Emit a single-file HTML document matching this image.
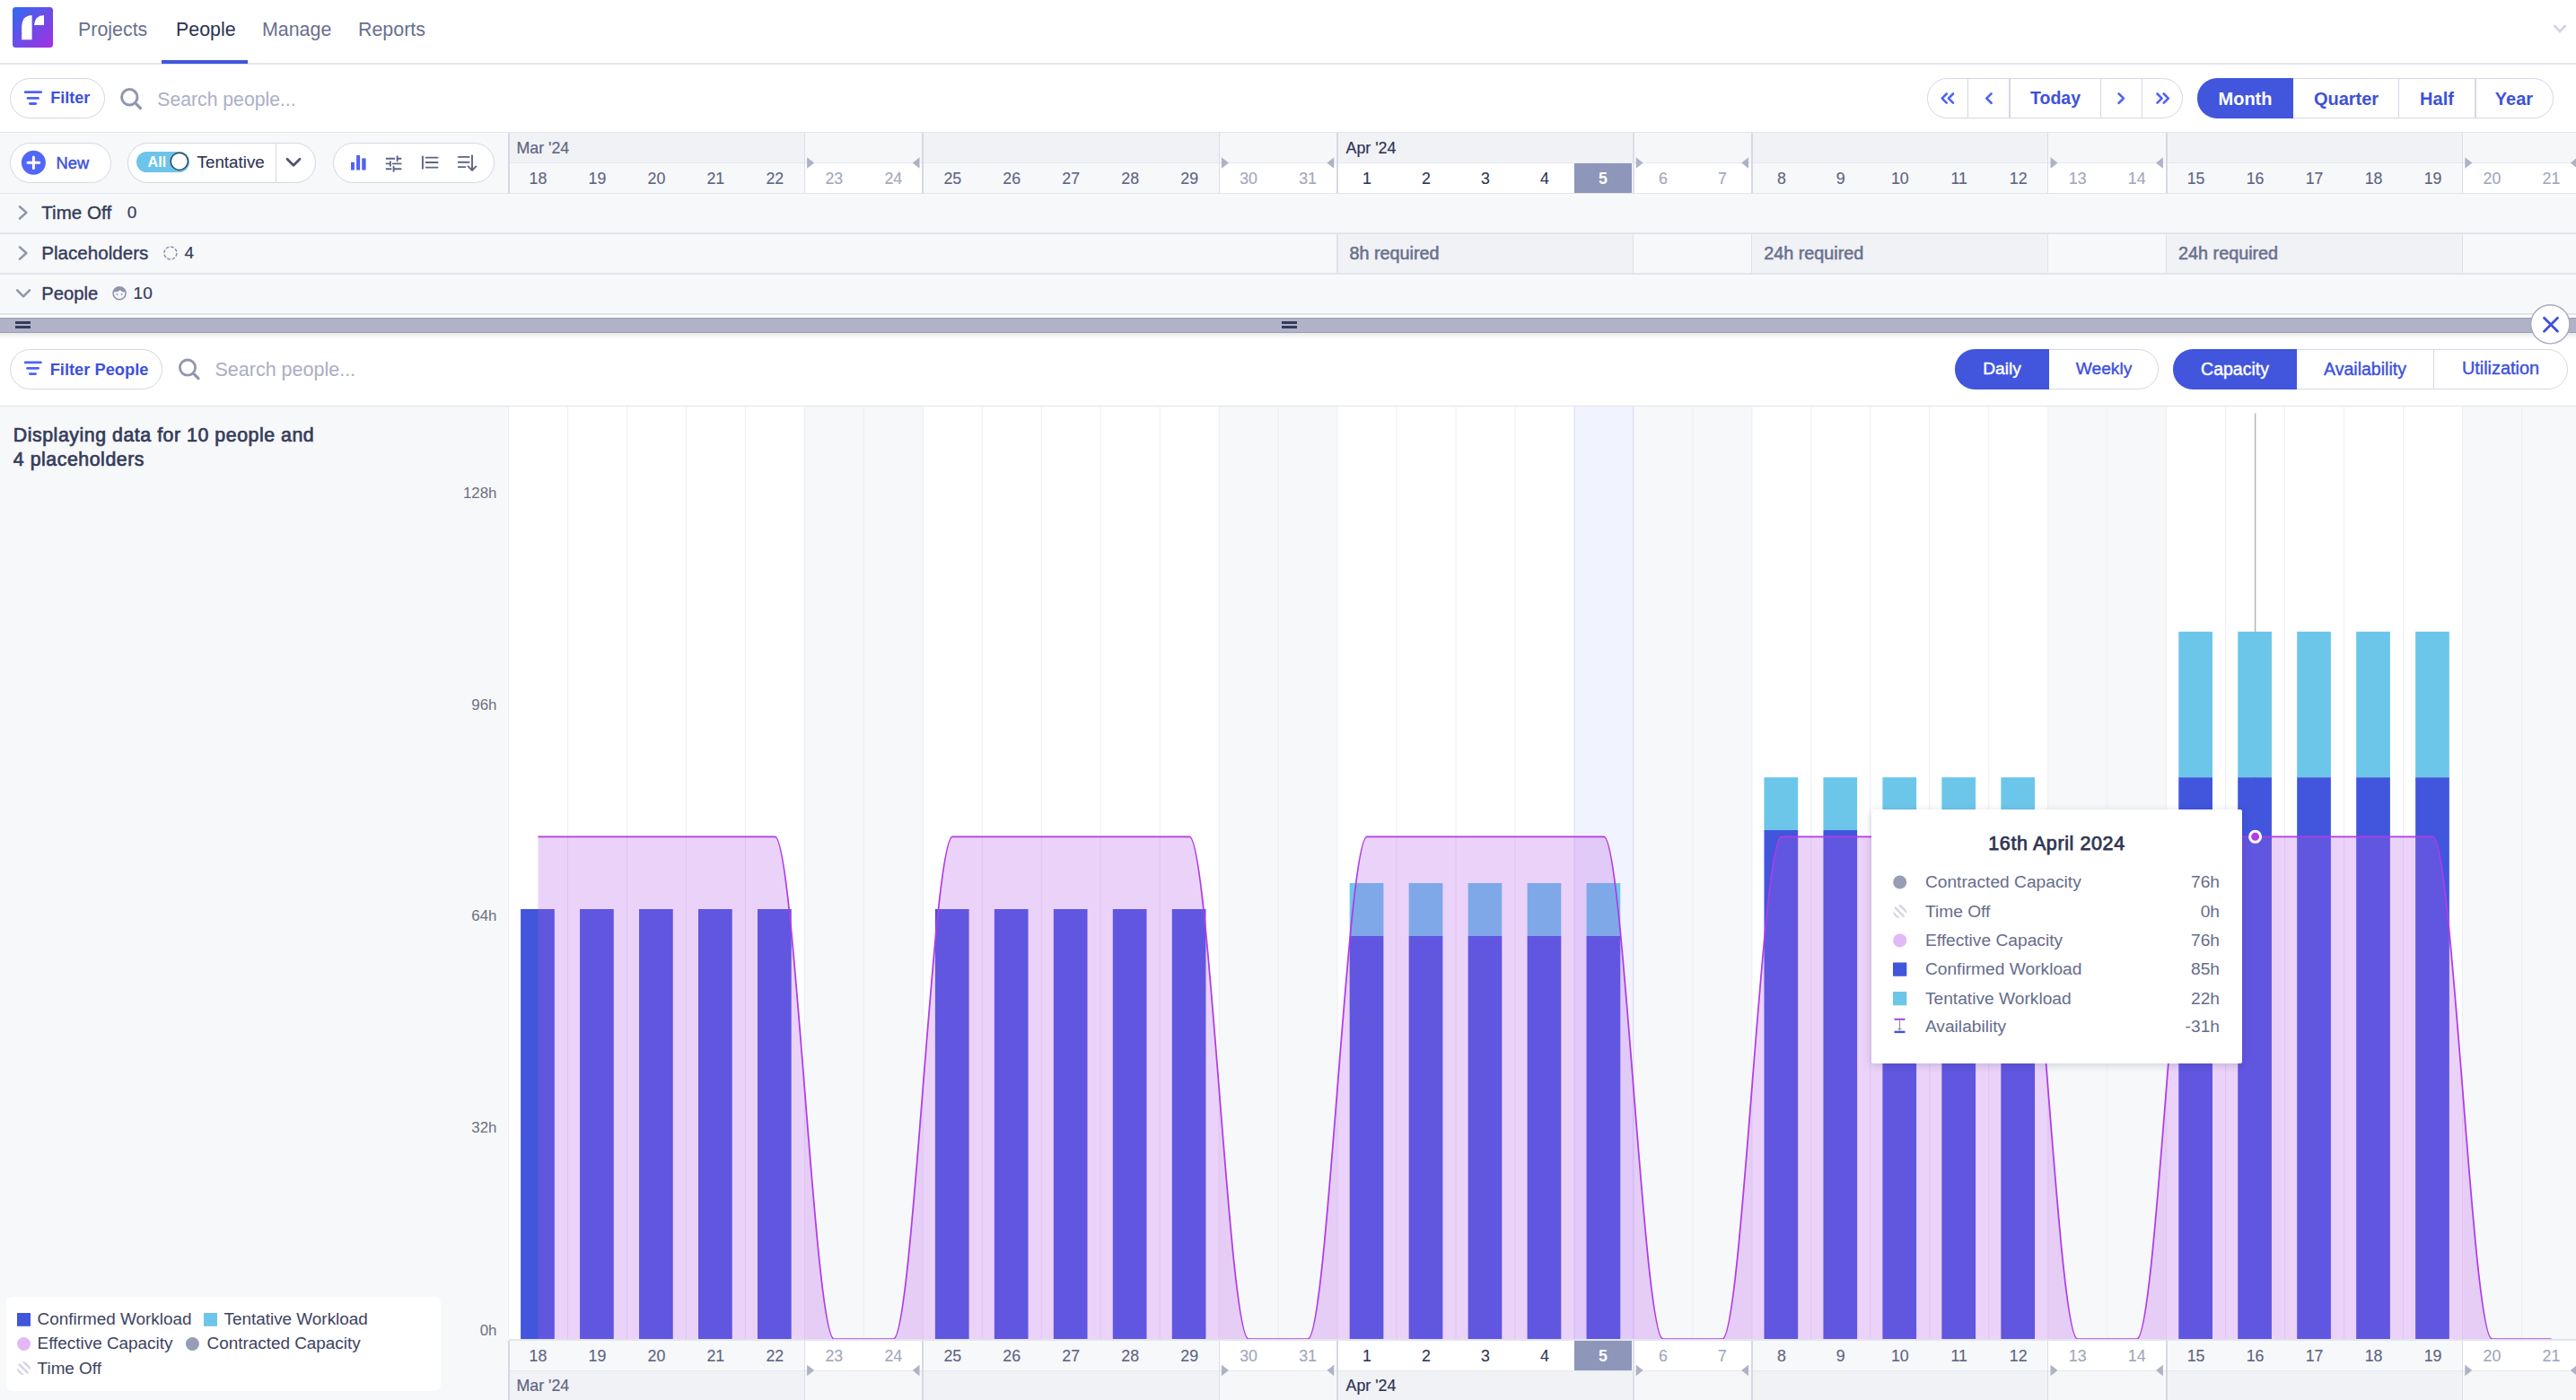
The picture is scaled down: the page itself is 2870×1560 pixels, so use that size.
<!DOCTYPE html>
<html><head><meta charset="utf-8"><title>People - Capacity</title>
<style>
html,body{margin:0;padding:0;}
body{width:2870px;height:1560px;overflow:hidden;position:relative;background:#fff;font-family:"Liberation Sans", sans-serif;}
.t{position:absolute;white-space:nowrap;}
.b{position:absolute;}
svg{overflow:visible}
</style></head><body>
<div class="b" style="left:0.00px;top:0.00px;width:2870.00px;height:71.00px;background:#fff;"></div>
<div class="b" style="left:0.00px;top:70.00px;width:2870.00px;height:1.50px;background:#e3e5ec;"></div>
<div class="b" style="left:0.00px;top:71.50px;width:2870.00px;height:75.50px;background:#fff;"></div>
<div class="b" style="left:0.00px;top:146.50px;width:2870.00px;height:1.50px;background:#e3e5ec;"></div>
<div class="b" style="left:0.00px;top:148.00px;width:2870.00px;height:202.00px;background:#f7f8fa;"></div>
<svg class="b" style="left:14px;top:8px" width="45" height="45" viewBox="0 0 45 45">
<defs><linearGradient id="lg" x1="0" y1="0" x2="1" y2="1"><stop offset="0" stop-color="#2f6cf0"/><stop offset="1" stop-color="#a52fe0"/></linearGradient></defs>
<rect width="45" height="45" rx="3.4" fill="url(#lg)"/>
<path d="M10.2 36.2 L10.2 22 Q10.4 9.2 21.6 9 L21.6 36.2 Z" fill="#fff"/>
<path d="M24 20 Q24.6 9.4 35 9 L35 20 Z" fill="#fff"/>
</svg>
<div class="t" style="left:87.00px;top:15.68px;font-size:21.4px;line-height:34.24px;color:#687090;font-weight:400;">Projects</div>
<div class="t" style="left:196.00px;top:15.68px;font-size:21.4px;line-height:34.24px;color:#2b3250;font-weight:400;">People</div>
<div class="t" style="left:292.00px;top:15.68px;font-size:21.4px;line-height:34.24px;color:#687090;font-weight:400;">Manage</div>
<div class="t" style="left:399.00px;top:15.68px;font-size:21.4px;line-height:34.24px;color:#687090;font-weight:400;">Reports</div>
<div class="b" style="left:180.00px;top:67.00px;width:96.00px;height:4.00px;background:#4156dd;"></div>
<svg class="b" style="left:2842px;top:25px" width="20" height="14" viewBox="0 0 20 14"><path d="M3.6 3.2 L10 9.9 L16.6 3.2" fill="none" stroke="#d3d5e2" stroke-width="2.8" stroke-linejoin="miter"/></svg>
<div class="b" style="left:11.00px;top:87.00px;width:105.60px;height:44.70px;border:1.5px solid #d5d7e3;border-radius:23px;background:#fff;box-sizing:border-box;"></div>
<svg class="b" style="left:20px;top:95px" width="34" height="28" viewBox="0 0 34 28"><g stroke="#4f63f5" stroke-width="2.8" stroke-linecap="round"><path d="M8.2 7.7 H25.6"/><path d="M11 14.4 H22.5"/><path d="M13.4 20.5 H19.7"/></g></svg>
<div class="t" style="left:56.30px;top:95.20px;font-size:18px;line-height:28.80px;color:#3d51dc;font-weight:700;">Filter</div>
<svg class="b" style="left:130px;top:94px" width="32" height="32" viewBox="0 0 32 32"><circle cx="14.3" cy="14.3" r="8.7" fill="none" stroke="#9196b0" stroke-width="3"/><path d="M21.5 21.6 L26.4 26.5" stroke="#9196b0" stroke-width="3.2" stroke-linecap="round"/></svg>
<div class="t" style="left:175.30px;top:93.94px;font-size:21.2px;line-height:33.92px;color:#abb0c6;font-weight:400;">Search people...</div>
<div class="b" style="left:2147.20px;top:87.20px;width:285.30px;height:44.80px;border:1.5px solid #d5d8e6;border-radius:22.40px;box-sizing:border-box;background:#fff"></div>
<div class="b" style="left:2191.65px;top:87.20px;width:1.50px;height:44.80px;background:#d5d8e6;"></div>
<div class="b" style="left:2238.05px;top:87.20px;width:1.50px;height:44.80px;background:#d5d8e6;"></div>
<div class="b" style="left:2339.65px;top:87.20px;width:1.50px;height:44.80px;background:#d5d8e6;"></div>
<div class="b" style="left:2385.85px;top:87.20px;width:1.50px;height:44.80px;background:#d5d8e6;"></div>
<svg class="b" style="left:2155px;top:95px" width="30" height="30" viewBox="0 0 30 30"><g fill="none" stroke="#4f63f5" stroke-width="2.6" stroke-linecap="round" stroke-linejoin="round"><path d="M13.8 9.5 L8.7 14.6 L13.8 19.7"/><path d="M21 9.5 L15.9 14.6 L21 19.7"/></g></svg>
<svg class="b" style="left:2201px;top:95px" width="30" height="30" viewBox="0 0 30 30"><g fill="none" stroke="#4f63f5" stroke-width="2.6" stroke-linecap="round" stroke-linejoin="round"><path d="M17.6 9.4 L12.3 14.6 L17.6 19.8"/></g></svg>
<div class="t" style="left:1990.00px;width:600px;text-align:center;top:94.00px;font-size:19.5px;line-height:31.20px;color:#3d51dc;font-weight:700;">Today</div>
<svg class="b" style="left:2348px;top:95px" width="30" height="30" viewBox="0 0 30 30"><g fill="none" stroke="#4f63f5" stroke-width="2.6" stroke-linecap="round" stroke-linejoin="round"><path d="M12.6 9.4 L17.9 14.6 L12.6 19.8"/></g></svg>
<svg class="b" style="left:2395px;top:95px" width="30" height="30" viewBox="0 0 30 30"><g fill="none" stroke="#4f63f5" stroke-width="2.6" stroke-linecap="round" stroke-linejoin="round"><path d="M8.5 9.5 L13.6 14.6 L8.5 19.7"/><path d="M15.7 9.5 L20.8 14.6 L15.7 19.7"/></g></svg>
<div class="b" style="left:2448.00px;top:87.20px;width:397.00px;height:44.80px;border:1.5px solid #d5d8e6;border-radius:22.40px;box-sizing:border-box;background:#fff"></div>
<div class="b" style="left:2448.00px;top:87.20px;width:107.00px;height:44.80px;border-radius:22.40px 0 0 22.40px;background:#4156dd"></div>
<div class="b" style="left:2671.75px;top:87.20px;width:1.50px;height:44.80px;background:#d5d8e6;"></div>
<div class="b" style="left:2757.25px;top:87.20px;width:1.50px;height:44.80px;background:#d5d8e6;"></div>
<div class="t" style="left:2201.50px;width:600px;text-align:center;top:93.60px;font-size:20px;line-height:32.00px;color:#fff;font-weight:700;">Month</div>
<div class="t" style="left:2314.00px;width:600px;text-align:center;top:93.60px;font-size:20px;line-height:32.00px;color:#3d51dc;font-weight:700;">Quarter</div>
<div class="t" style="left:2415.00px;width:600px;text-align:center;top:93.60px;font-size:20px;line-height:32.00px;color:#3d51dc;font-weight:700;">Half</div>
<div class="t" style="left:2501.00px;width:600px;text-align:center;top:93.60px;font-size:20px;line-height:32.00px;color:#3d51dc;font-weight:700;">Year</div>
<div class="b" style="left:11.30px;top:159.10px;width:113.00px;height:45.00px;border:1.5px solid #d5d7e3;border-radius:23px;background:#fff;box-sizing:border-box;"></div>
<svg class="b" style="left:23px;top:167px" width="29" height="29" viewBox="0 0 29 29"><circle cx="14.4" cy="14.3" r="13.5" fill="#5267f8"/><path d="M14.4 8 V20.6 M8.1 14.3 H20.7" stroke="#fff" stroke-width="3" stroke-linecap="round"/></svg>
<div class="t" style="left:62.60px;top:166.96px;font-size:18.3px;line-height:29.28px;color:#3d51dc;font-weight:400;-webkit-text-stroke:0.45px #3d51dc;">New</div>
<div class="b" style="left:142.40px;top:159.10px;width:209.80px;height:45.00px;border:1.5px solid #d5d7e3;border-radius:23px;background:#fff;box-sizing:border-box;"></div>
<div class="b" style="left:306.90px;top:159.10px;width:1.50px;height:44.40px;background:#d5d7e3;"></div>
<div class="b" style="left:152.20px;top:168.90px;width:58.70px;height:22.80px;background:#6cc4ea;border-radius:12px;"></div>
<div class="t" style="left:164.60px;top:167.64px;font-size:16.2px;line-height:25.92px;color:#fff;font-weight:700;">All</div>
<svg class="b" style="left:187px;top:167px" width="26" height="26" viewBox="0 0 26 26"><circle cx="12.8" cy="12.8" r="10.9" fill="#6cc4ea"/><circle cx="12.8" cy="12.8" r="9.6" fill="#fff" stroke="#2f4a5e" stroke-width="1.5"/></svg>
<div class="t" style="left:219.60px;top:165.86px;font-size:18.8px;line-height:30.08px;color:#2e3553;font-weight:400;-webkit-text-stroke:0.1px #2e3553;">Tentative</div>
<svg class="b" style="left:316px;top:172px" width="22" height="18" viewBox="0 0 22 18"><path d="M4 5.3 L11 12.3 L18 5.3" fill="none" stroke="#4e5571" stroke-width="2.8" stroke-linecap="round" stroke-linejoin="round"/></svg>
<div class="b" style="left:371.10px;top:159.20px;width:179.60px;height:45.00px;border:1.5px solid #d5d7e3;border-radius:23px;background:#fff;box-sizing:border-box;"></div>
<svg class="b" style="left:380px;top:165px" width="165" height="32" viewBox="380 165 165 32">
<g fill="#4f63f5"><rect x="391" y="180.7" width="3.9" height="8.8"/><rect x="397.1" y="173" width="4" height="16.5"/><rect x="403.2" y="176.4" width="4.4" height="13.1"/></g>
<g stroke="#5d6485" stroke-width="1.9" stroke-linecap="round" fill="none">
<path d="M430.6 176.7 H439.3 M442.6 176.7 H446.6 M442.6 174.2 V179.2"/>
<path d="M430.6 182.4 H434.9 M437.8 182.4 H446.6 M434.9 180.1 V184.8"/>
<path d="M430.6 188.3 H435.6 M438.6 188.3 H446.6 M438.6 185.8 V190.8"/>
<path d="M470.9 174.4 V187.8"/>
<path d="M474.6 175.6 H487.6 M474.6 181 H487.6 M474.6 186.6 H487.6"/>
<path d="M510.8 174.9 H522.6 M510.8 180.7 H522.6 M510.8 186.1 H518.4"/>
<path d="M526 173.2 V189.5 M521.6 185.4 L526 189.7 L530.4 185.4" stroke-linejoin="round"/>
</g></svg>
<div class="b" style="left:566.50px;top:147.50px;width:329.85px;height:34.00px;background:#f1f2f5;"></div>
<div class="b" style="left:896.35px;top:147.50px;width:131.94px;height:34.00px;background:#f6f7f9;"></div>
<div class="b" style="left:1028.29px;top:147.50px;width:329.85px;height:34.00px;background:#f1f2f5;"></div>
<div class="b" style="left:1358.14px;top:147.50px;width:131.94px;height:34.00px;background:#f6f7f9;"></div>
<div class="b" style="left:1490.08px;top:147.50px;width:329.85px;height:34.00px;background:#f1f2f5;"></div>
<div class="b" style="left:1819.93px;top:147.50px;width:131.94px;height:34.00px;background:#f6f7f9;"></div>
<div class="b" style="left:1951.87px;top:147.50px;width:329.85px;height:34.00px;background:#f1f2f5;"></div>
<div class="b" style="left:2281.72px;top:147.50px;width:131.94px;height:34.00px;background:#f6f7f9;"></div>
<div class="b" style="left:2413.66px;top:147.50px;width:329.85px;height:34.00px;background:#f1f2f5;"></div>
<div class="b" style="left:2743.51px;top:147.50px;width:131.94px;height:34.00px;background:#f6f7f9;"></div>
<div class="b" style="left:566.50px;top:181.50px;width:65.97px;height:33.50px;background:#f7f8fa;"></div>
<div class="b" style="left:632.47px;top:181.50px;width:65.97px;height:33.50px;background:#f7f8fa;"></div>
<div class="b" style="left:698.44px;top:181.50px;width:65.97px;height:33.50px;background:#f7f8fa;"></div>
<div class="b" style="left:764.41px;top:181.50px;width:65.97px;height:33.50px;background:#f7f8fa;"></div>
<div class="b" style="left:830.38px;top:181.50px;width:65.97px;height:33.50px;background:#f7f8fa;"></div>
<div class="b" style="left:896.35px;top:181.50px;width:65.97px;height:33.50px;background:#ffffff;"></div>
<div class="b" style="left:962.32px;top:181.50px;width:65.97px;height:33.50px;background:#ffffff;"></div>
<div class="b" style="left:1028.29px;top:181.50px;width:65.97px;height:33.50px;background:#f7f8fa;"></div>
<div class="b" style="left:1094.26px;top:181.50px;width:65.97px;height:33.50px;background:#f7f8fa;"></div>
<div class="b" style="left:1160.23px;top:181.50px;width:65.97px;height:33.50px;background:#f7f8fa;"></div>
<div class="b" style="left:1226.20px;top:181.50px;width:65.97px;height:33.50px;background:#f7f8fa;"></div>
<div class="b" style="left:1292.17px;top:181.50px;width:65.97px;height:33.50px;background:#f7f8fa;"></div>
<div class="b" style="left:1358.14px;top:181.50px;width:65.97px;height:33.50px;background:#ffffff;"></div>
<div class="b" style="left:1424.11px;top:181.50px;width:65.97px;height:33.50px;background:#ffffff;"></div>
<div class="b" style="left:1490.08px;top:181.50px;width:65.97px;height:33.50px;background:#ffffff;"></div>
<div class="b" style="left:1556.05px;top:181.50px;width:65.97px;height:33.50px;background:#ffffff;"></div>
<div class="b" style="left:1622.02px;top:181.50px;width:65.97px;height:33.50px;background:#ffffff;"></div>
<div class="b" style="left:1687.99px;top:181.50px;width:65.97px;height:33.50px;background:#ffffff;"></div>
<div class="b" style="left:1753.96px;top:181.50px;width:65.97px;height:33.50px;background:#f7f8fa;"></div>
<div class="b" style="left:1819.93px;top:181.50px;width:65.97px;height:33.50px;background:#ffffff;"></div>
<div class="b" style="left:1885.90px;top:181.50px;width:65.97px;height:33.50px;background:#ffffff;"></div>
<div class="b" style="left:1951.87px;top:181.50px;width:65.97px;height:33.50px;background:#f7f8fa;"></div>
<div class="b" style="left:2017.84px;top:181.50px;width:65.97px;height:33.50px;background:#f7f8fa;"></div>
<div class="b" style="left:2083.81px;top:181.50px;width:65.97px;height:33.50px;background:#f7f8fa;"></div>
<div class="b" style="left:2149.78px;top:181.50px;width:65.97px;height:33.50px;background:#f7f8fa;"></div>
<div class="b" style="left:2215.75px;top:181.50px;width:65.97px;height:33.50px;background:#f7f8fa;"></div>
<div class="b" style="left:2281.72px;top:181.50px;width:65.97px;height:33.50px;background:#ffffff;"></div>
<div class="b" style="left:2347.69px;top:181.50px;width:65.97px;height:33.50px;background:#ffffff;"></div>
<div class="b" style="left:2413.66px;top:181.50px;width:65.97px;height:33.50px;background:#f7f8fa;"></div>
<div class="b" style="left:2479.63px;top:181.50px;width:65.97px;height:33.50px;background:#f7f8fa;"></div>
<div class="b" style="left:2545.60px;top:181.50px;width:65.97px;height:33.50px;background:#f7f8fa;"></div>
<div class="b" style="left:2611.57px;top:181.50px;width:65.97px;height:33.50px;background:#f7f8fa;"></div>
<div class="b" style="left:2677.54px;top:181.50px;width:65.97px;height:33.50px;background:#f7f8fa;"></div>
<div class="b" style="left:2743.51px;top:181.50px;width:65.97px;height:33.50px;background:#ffffff;"></div>
<div class="b" style="left:2809.48px;top:181.50px;width:65.97px;height:33.50px;background:#ffffff;"></div>
<div class="b" style="left:1753.96px;top:181.50px;width:63.97px;height:33.50px;background:#8e96ba;"></div>
<div class="b" style="left:566.50px;top:181.00px;width:2303.50px;height:1.00px;background:#e6e8ee;"></div>
<div class="b" style="left:565.50px;top:147.50px;width:2.00px;height:67.50px;background:#d6d8e3;"></div>
<div class="b" style="left:895.85px;top:147.50px;width:1.20px;height:67.50px;background:#dcdee6;"></div>
<div class="b" style="left:1027.29px;top:147.50px;width:2.00px;height:67.50px;background:#d6d8e3;"></div>
<div class="b" style="left:1357.64px;top:147.50px;width:1.20px;height:67.50px;background:#dcdee6;"></div>
<div class="b" style="left:1489.08px;top:147.50px;width:2.00px;height:67.50px;background:#d6d8e3;"></div>
<div class="b" style="left:1819.43px;top:147.50px;width:1.20px;height:67.50px;background:#dcdee6;"></div>
<div class="b" style="left:1950.87px;top:147.50px;width:2.00px;height:67.50px;background:#d6d8e3;"></div>
<div class="b" style="left:2281.22px;top:147.50px;width:1.20px;height:67.50px;background:#dcdee6;"></div>
<div class="b" style="left:2412.66px;top:147.50px;width:2.00px;height:67.50px;background:#d6d8e3;"></div>
<div class="b" style="left:2743.01px;top:147.50px;width:1.20px;height:67.50px;background:#dcdee6;"></div>
<div class="b" style="left:2874.45px;top:147.50px;width:2.00px;height:67.50px;background:#d6d8e3;"></div>
<svg class="b" style="left:0;top:0" width="2870" height="1560"><g fill="#aeb2c7"><path d="M899.15 175.20 L907.15 181.50 L899.15 187.80 Z"/><path d="M1024.49 175.20 L1016.69 181.50 L1024.49 187.80 Z"/><path d="M1360.94 175.20 L1368.94 181.50 L1360.94 187.80 Z"/><path d="M1486.28 175.20 L1478.48 181.50 L1486.28 187.80 Z"/><path d="M1822.73 175.20 L1830.73 181.50 L1822.73 187.80 Z"/><path d="M1948.07 175.20 L1940.27 181.50 L1948.07 187.80 Z"/><path d="M2284.52 175.20 L2292.52 181.50 L2284.52 187.80 Z"/><path d="M2409.86 175.20 L2402.06 181.50 L2409.86 187.80 Z"/><path d="M2746.31 175.20 L2754.31 181.50 L2746.31 187.80 Z"/><path d="M2871.65 175.20 L2863.85 181.50 L2871.65 187.80 Z"/></g></svg>
<div class="t" style="left:575.50px;top:151.36px;font-size:17.8px;line-height:28.48px;color:#5f6683;font-weight:400;-webkit-text-stroke:0.2px #5f6683;">Mar '24</div>
<div class="t" style="left:1499.58px;top:151.36px;font-size:17.8px;line-height:28.48px;color:#2e3553;font-weight:400;-webkit-text-stroke:0.2px #2e3553;">Apr '24</div>
<div class="t" style="left:299.49px;width:600px;text-align:center;top:185.16px;font-size:17.8px;line-height:28.48px;color:#5d6482;font-weight:400;-webkit-text-stroke:0.12px #5d6482;">18</div>
<div class="t" style="left:365.46px;width:600px;text-align:center;top:185.16px;font-size:17.8px;line-height:28.48px;color:#5d6482;font-weight:400;-webkit-text-stroke:0.12px #5d6482;">19</div>
<div class="t" style="left:431.42px;width:600px;text-align:center;top:185.16px;font-size:17.8px;line-height:28.48px;color:#5d6482;font-weight:400;-webkit-text-stroke:0.12px #5d6482;">20</div>
<div class="t" style="left:497.39px;width:600px;text-align:center;top:185.16px;font-size:17.8px;line-height:28.48px;color:#5d6482;font-weight:400;-webkit-text-stroke:0.12px #5d6482;">21</div>
<div class="t" style="left:563.37px;width:600px;text-align:center;top:185.16px;font-size:17.8px;line-height:28.48px;color:#5d6482;font-weight:400;-webkit-text-stroke:0.12px #5d6482;">22</div>
<div class="t" style="left:629.34px;width:600px;text-align:center;top:185.16px;font-size:17.8px;line-height:28.48px;color:#a2a7bc;font-weight:400;-webkit-text-stroke:0.12px #a2a7bc;">23</div>
<div class="t" style="left:695.31px;width:600px;text-align:center;top:185.16px;font-size:17.8px;line-height:28.48px;color:#a2a7bc;font-weight:400;-webkit-text-stroke:0.12px #a2a7bc;">24</div>
<div class="t" style="left:761.28px;width:600px;text-align:center;top:185.16px;font-size:17.8px;line-height:28.48px;color:#5d6482;font-weight:400;-webkit-text-stroke:0.12px #5d6482;">25</div>
<div class="t" style="left:827.24px;width:600px;text-align:center;top:185.16px;font-size:17.8px;line-height:28.48px;color:#5d6482;font-weight:400;-webkit-text-stroke:0.12px #5d6482;">26</div>
<div class="t" style="left:893.22px;width:600px;text-align:center;top:185.16px;font-size:17.8px;line-height:28.48px;color:#5d6482;font-weight:400;-webkit-text-stroke:0.12px #5d6482;">27</div>
<div class="t" style="left:959.18px;width:600px;text-align:center;top:185.16px;font-size:17.8px;line-height:28.48px;color:#5d6482;font-weight:400;-webkit-text-stroke:0.12px #5d6482;">28</div>
<div class="t" style="left:1025.15px;width:600px;text-align:center;top:185.16px;font-size:17.8px;line-height:28.48px;color:#5d6482;font-weight:400;-webkit-text-stroke:0.12px #5d6482;">29</div>
<div class="t" style="left:1091.12px;width:600px;text-align:center;top:185.16px;font-size:17.8px;line-height:28.48px;color:#a2a7bc;font-weight:400;-webkit-text-stroke:0.12px #a2a7bc;">30</div>
<div class="t" style="left:1157.10px;width:600px;text-align:center;top:185.16px;font-size:17.8px;line-height:28.48px;color:#a2a7bc;font-weight:400;-webkit-text-stroke:0.12px #a2a7bc;">31</div>
<div class="t" style="left:1223.07px;width:600px;text-align:center;top:185.16px;font-size:17.8px;line-height:28.48px;color:#2e3553;font-weight:400;-webkit-text-stroke:0.12px #2e3553;">1</div>
<div class="t" style="left:1289.03px;width:600px;text-align:center;top:185.16px;font-size:17.8px;line-height:28.48px;color:#2e3553;font-weight:400;-webkit-text-stroke:0.12px #2e3553;">2</div>
<div class="t" style="left:1355.00px;width:600px;text-align:center;top:185.16px;font-size:17.8px;line-height:28.48px;color:#2e3553;font-weight:400;-webkit-text-stroke:0.12px #2e3553;">3</div>
<div class="t" style="left:1420.97px;width:600px;text-align:center;top:185.16px;font-size:17.8px;line-height:28.48px;color:#2e3553;font-weight:400;-webkit-text-stroke:0.12px #2e3553;">4</div>
<div class="t" style="left:1485.94px;width:600px;text-align:center;top:185.16px;font-size:17.8px;line-height:28.48px;color:#ffffff;font-weight:700;">5</div>
<div class="t" style="left:1552.91px;width:600px;text-align:center;top:185.16px;font-size:17.8px;line-height:28.48px;color:#a2a7bc;font-weight:400;-webkit-text-stroke:0.12px #a2a7bc;">6</div>
<div class="t" style="left:1618.88px;width:600px;text-align:center;top:185.16px;font-size:17.8px;line-height:28.48px;color:#a2a7bc;font-weight:400;-webkit-text-stroke:0.12px #a2a7bc;">7</div>
<div class="t" style="left:1684.86px;width:600px;text-align:center;top:185.16px;font-size:17.8px;line-height:28.48px;color:#5d6482;font-weight:400;-webkit-text-stroke:0.12px #5d6482;">8</div>
<div class="t" style="left:1750.82px;width:600px;text-align:center;top:185.16px;font-size:17.8px;line-height:28.48px;color:#5d6482;font-weight:400;-webkit-text-stroke:0.12px #5d6482;">9</div>
<div class="t" style="left:1816.80px;width:600px;text-align:center;top:185.16px;font-size:17.8px;line-height:28.48px;color:#5d6482;font-weight:400;-webkit-text-stroke:0.12px #5d6482;">10</div>
<div class="t" style="left:1882.76px;width:600px;text-align:center;top:185.16px;font-size:17.8px;line-height:28.48px;color:#5d6482;font-weight:400;-webkit-text-stroke:0.12px #5d6482;">11</div>
<div class="t" style="left:1948.73px;width:600px;text-align:center;top:185.16px;font-size:17.8px;line-height:28.48px;color:#5d6482;font-weight:400;-webkit-text-stroke:0.12px #5d6482;">12</div>
<div class="t" style="left:2014.70px;width:600px;text-align:center;top:185.16px;font-size:17.8px;line-height:28.48px;color:#a2a7bc;font-weight:400;-webkit-text-stroke:0.12px #a2a7bc;">13</div>
<div class="t" style="left:2080.68px;width:600px;text-align:center;top:185.16px;font-size:17.8px;line-height:28.48px;color:#a2a7bc;font-weight:400;-webkit-text-stroke:0.12px #a2a7bc;">14</div>
<div class="t" style="left:2146.64px;width:600px;text-align:center;top:185.16px;font-size:17.8px;line-height:28.48px;color:#5d6482;font-weight:400;-webkit-text-stroke:0.12px #5d6482;">15</div>
<div class="t" style="left:2212.61px;width:600px;text-align:center;top:185.16px;font-size:17.8px;line-height:28.48px;color:#5d6482;font-weight:400;-webkit-text-stroke:0.12px #5d6482;">16</div>
<div class="t" style="left:2278.59px;width:600px;text-align:center;top:185.16px;font-size:17.8px;line-height:28.48px;color:#5d6482;font-weight:400;-webkit-text-stroke:0.12px #5d6482;">17</div>
<div class="t" style="left:2344.55px;width:600px;text-align:center;top:185.16px;font-size:17.8px;line-height:28.48px;color:#5d6482;font-weight:400;-webkit-text-stroke:0.12px #5d6482;">18</div>
<div class="t" style="left:2410.53px;width:600px;text-align:center;top:185.16px;font-size:17.8px;line-height:28.48px;color:#5d6482;font-weight:400;-webkit-text-stroke:0.12px #5d6482;">19</div>
<div class="t" style="left:2476.49px;width:600px;text-align:center;top:185.16px;font-size:17.8px;line-height:28.48px;color:#a2a7bc;font-weight:400;-webkit-text-stroke:0.12px #a2a7bc;">20</div>
<div class="t" style="left:2542.47px;width:600px;text-align:center;top:185.16px;font-size:17.8px;line-height:28.48px;color:#a2a7bc;font-weight:400;-webkit-text-stroke:0.12px #a2a7bc;">21</div>
<div class="b" style="left:0.00px;top:214.50px;width:2870.00px;height:1.50px;background:#e3e5ec;"></div>
<div class="b" style="left:0.00px;top:259.00px;width:2870.00px;height:2.00px;background:#e3e5ec;"></div>
<div class="b" style="left:0.00px;top:304.00px;width:2870.00px;height:2.00px;background:#e3e5ec;"></div>
<div class="b" style="left:0.00px;top:348.50px;width:2870.00px;height:2.00px;background:#e3e5ec;"></div>
<div class="b" style="left:1490.08px;top:261.00px;width:329.85px;height:43.00px;background:#f1f2f5;"></div>
<div class="b" style="left:1489.08px;top:261.00px;width:1.50px;height:43.00px;background:#dfe1e9;"></div>
<div class="b" style="left:1818.93px;top:261.00px;width:1.50px;height:43.00px;background:#dfe1e9;"></div>
<div class="t" style="left:1503.48px;top:266.96px;font-size:19.8px;line-height:31.68px;color:#6a7190;font-weight:400;-webkit-text-stroke:0.55px #6a7190;">8h required</div>
<div class="b" style="left:1951.87px;top:261.00px;width:329.85px;height:43.00px;background:#f1f2f5;"></div>
<div class="b" style="left:1950.87px;top:261.00px;width:1.50px;height:43.00px;background:#dfe1e9;"></div>
<div class="b" style="left:2280.72px;top:261.00px;width:1.50px;height:43.00px;background:#dfe1e9;"></div>
<div class="t" style="left:1965.27px;top:266.96px;font-size:19.8px;line-height:31.68px;color:#6a7190;font-weight:400;-webkit-text-stroke:0.55px #6a7190;">24h required</div>
<div class="b" style="left:2413.66px;top:261.00px;width:329.85px;height:43.00px;background:#f1f2f5;"></div>
<div class="b" style="left:2412.66px;top:261.00px;width:1.50px;height:43.00px;background:#dfe1e9;"></div>
<div class="b" style="left:2742.51px;top:261.00px;width:1.50px;height:43.00px;background:#dfe1e9;"></div>
<div class="t" style="left:2427.06px;top:266.96px;font-size:19.8px;line-height:31.68px;color:#6a7190;font-weight:400;-webkit-text-stroke:0.55px #6a7190;">24h required</div>
<svg class="b" style="left:14px;top:222px" width="24" height="120" viewBox="14 222 24 120"><g fill="none" stroke="#9096ae" stroke-width="2.6" stroke-linecap="round" stroke-linejoin="round"><path d="M22 230.3 L29.4 236.9 L22 243.5"/><path d="M22 275.4 L29.4 282 L22 288.6"/><path d="M19.2 323.4 L26.1 330.3 L33 323.4"/></g></svg>
<div class="t" style="left:46.30px;top:220.72px;font-size:20.6px;line-height:32.96px;color:#343b59;font-weight:400;-webkit-text-stroke:0.38px #343b59;">Time Off</div>
<div class="t" style="left:141.70px;top:222.00px;font-size:19px;line-height:30.40px;color:#353c5a;font-weight:400;-webkit-text-stroke:0.2px #353c5a;">0</div>
<div class="t" style="left:46.30px;top:265.92px;font-size:20.6px;line-height:32.96px;color:#343b59;font-weight:400;-webkit-text-stroke:0.38px #343b59;">Placeholders</div>
<svg class="b" style="left:180px;top:272px" width="20" height="20" viewBox="0 0 20 20"><circle cx="9.9" cy="10" r="7" fill="none" stroke="#8e94ad" stroke-width="1.6" stroke-dasharray="3.7 1.8"/></svg>
<div class="t" style="left:205.50px;top:267.20px;font-size:19px;line-height:30.40px;color:#353c5a;font-weight:400;-webkit-text-stroke:0.2px #353c5a;">4</div>
<div class="t" style="left:46.30px;top:311.24px;font-size:20.2px;line-height:32.32px;color:#343b59;font-weight:400;-webkit-text-stroke:0.38px #343b59;">People</div>
<svg class="b" style="left:123px;top:317px" width="20" height="20" viewBox="0 0 20 20"><circle cx="10.1" cy="9.8" r="7" fill="none" stroke="#8e94ad" stroke-width="1.6"/><path d="M3.5 8.5 Q5 3 10 3 Q15 3 16.6 8.5 Q13 8.8 11 6.2 Q8 8.8 3.5 8.5 Z" fill="#8e94ad"/><circle cx="7.5" cy="11" r="0.9" fill="#8e94ad"/><circle cx="12.6" cy="11" r="0.9" fill="#8e94ad"/></svg>
<div class="t" style="left:148.60px;top:312.20px;font-size:19px;line-height:30.40px;color:#353c5a;font-weight:400;-webkit-text-stroke:0.2px #353c5a;">10</div>
<div class="b" style="left:0.00px;top:350.50px;width:2870.00px;height:3.50px;background:#fff;"></div>
<div class="b" style="left:0.00px;top:354.00px;width:2870.00px;height:17.00px;background:#b0b3c7;border-top:1px solid #9a9db6;border-bottom:1.2px solid #9a9db6;box-sizing:border-box;"></div>
<div class="b" style="left:17.00px;top:357.90px;width:16.50px;height:2.90px;background:#353b5c;"></div>
<div class="b" style="left:17.00px;top:363.10px;width:16.50px;height:2.90px;background:#353b5c;"></div>
<div class="b" style="left:1428.00px;top:357.90px;width:16.50px;height:2.90px;background:#353b5c;"></div>
<div class="b" style="left:1428.00px;top:363.10px;width:16.50px;height:2.90px;background:#353b5c;"></div>
<div class="b" style="left:0.00px;top:371.00px;width:2870.00px;height:81.00px;background:#fff;"></div>
<div class="b" style="left:0.00px;top:451.50px;width:2870.00px;height:1.50px;background:#e3e5ec;"></div>
<div class="b" style="left:0.00px;top:371.00px;width:2870.00px;height:7.00px;background:linear-gradient(rgba(40,45,60,0.10),rgba(40,45,60,0));"></div>
<div class="b" style="left:11.30px;top:389.00px;width:170.20px;height:44.70px;border:1.5px solid #d5d7e3;border-radius:23px;background:#fff;box-sizing:border-box;"></div>
<svg class="b" style="left:22px;top:397px" width="30" height="28" viewBox="0 0 30 28"><g stroke="#4f63f5" stroke-width="2.8" stroke-linecap="round"><path d="M6.2 6.9 H23.4"/><path d="M8.5 13.3 H20.6"/><path d="M11.4 19.7 H17.6"/></g></svg>
<div class="t" style="left:55.70px;top:396.96px;font-size:18.3px;line-height:29.28px;color:#3d51dc;font-weight:700;">Filter People</div>
<svg class="b" style="left:195px;top:395.5px" width="32" height="32" viewBox="0 0 32 32"><circle cx="14" cy="13.6" r="8.6" fill="none" stroke="#9196b0" stroke-width="2.8"/><path d="M21.2 20.9 L26 25.6" stroke="#9196b0" stroke-width="3.2" stroke-linecap="round"/></svg>
<div class="t" style="left:239.50px;top:394.60px;font-size:21.5px;line-height:34.40px;color:#a9aec4;font-weight:400;">Search people...</div>
<div class="b" style="left:2178.30px;top:389.00px;width:227.20px;height:44.60px;border:1.5px solid #d5d8e6;border-radius:22.30px;box-sizing:border-box;background:#fff"></div>
<div class="b" style="left:2178.30px;top:389.00px;width:104.40px;height:44.60px;border-radius:22.30px 0 0 22.30px;background:#4156dd"></div>
<div class="t" style="left:1930.50px;width:600px;text-align:center;top:395.94px;font-size:19.2px;line-height:30.72px;color:#fff;font-weight:400;-webkit-text-stroke:0.4px #fff;">Daily</div>
<div class="t" style="left:2044.00px;width:600px;text-align:center;top:395.94px;font-size:19.2px;line-height:30.72px;color:#3d51dc;font-weight:400;-webkit-text-stroke:0.4px #3d51dc;">Weekly</div>
<div class="b" style="left:2421.40px;top:389.00px;width:439.40px;height:44.60px;border:1.5px solid #d5d8e6;border-radius:22.30px;box-sizing:border-box;background:#fff"></div>
<div class="b" style="left:2421.40px;top:389.00px;width:137.50px;height:44.60px;border-radius:22.30px 0 0 22.30px;background:#4156dd"></div>
<div class="b" style="left:2710.65px;top:389.00px;width:1.50px;height:44.60px;background:#d5d8e6;"></div>
<div class="t" style="left:2190.00px;width:600px;text-align:center;top:395.70px;font-size:19.5px;line-height:31.20px;color:#fff;font-weight:400;-webkit-text-stroke:0.4px #fff;">Capacity</div>
<div class="t" style="left:2335.00px;width:600px;text-align:center;top:395.70px;font-size:19.5px;line-height:31.20px;color:#3d51dc;font-weight:400;-webkit-text-stroke:0.4px #3d51dc;">Availability</div>
<div class="t" style="left:2486.00px;width:600px;text-align:center;top:395.38px;font-size:19.9px;line-height:31.84px;color:#3d51dc;font-weight:400;-webkit-text-stroke:0.4px #3d51dc;">Utilization</div>
<svg class="b" style="left:2818px;top:337px" width="48" height="48" viewBox="0 0 48 48"><circle cx="23.3" cy="24.3" r="21.6" fill="#fff" stroke="#a7aac0" stroke-width="1.4"/><path d="M16.5 17.2 L31.5 32.2 M31.5 17.2 L16.5 32.2" stroke="#3d51dc" stroke-width="2.8" stroke-linecap="round"/></svg>
<div class="b" style="left:0.00px;top:453.00px;width:2870.00px;height:1107.00px;background:#f7f8fa;"></div>
<div class="t" style="left:14.80px;top:467.76px;font-size:21.3px;line-height:34.08px;color:#353c5a;font-weight:400;letter-spacing:0.55px;-webkit-text-stroke:0.7px #353c5a;">Displaying data for 10 people and</div>
<div class="t" style="left:14.80px;top:495.16px;font-size:21.3px;line-height:34.08px;color:#353c5a;font-weight:400;letter-spacing:0.55px;-webkit-text-stroke:0.7px #353c5a;">4 placeholders</div>
<div class="t" style="left:-46.50px;width:600px;text-align:right;top:535.88px;font-size:16.9px;line-height:27.04px;color:#6d7080;font-weight:400;">128h</div>
<div class="t" style="left:-46.50px;width:600px;text-align:right;top:771.88px;font-size:16.9px;line-height:27.04px;color:#6d7080;font-weight:400;">96h</div>
<div class="t" style="left:-46.50px;width:600px;text-align:right;top:1007.48px;font-size:16.9px;line-height:27.04px;color:#6d7080;font-weight:400;">64h</div>
<div class="t" style="left:-46.50px;width:600px;text-align:right;top:1242.88px;font-size:16.9px;line-height:27.04px;color:#6d7080;font-weight:400;">32h</div>
<div class="t" style="left:-46.50px;width:600px;text-align:right;top:1468.98px;font-size:16.9px;line-height:27.04px;color:#6d7080;font-weight:400;">0h</div>
<svg class="b" style="left:0;top:0" width="2870" height="1560"><rect x="566.50" y="453" width="66.27" height="1039" fill="#ffffff"/><rect x="632.47" y="453" width="66.27" height="1039" fill="#ffffff"/><rect x="698.44" y="453" width="66.27" height="1039" fill="#ffffff"/><rect x="764.41" y="453" width="66.27" height="1039" fill="#ffffff"/><rect x="830.38" y="453" width="66.27" height="1039" fill="#ffffff"/><rect x="896.35" y="453" width="66.27" height="1039" fill="#f7f8fa"/><rect x="962.32" y="453" width="66.27" height="1039" fill="#f7f8fa"/><rect x="1028.29" y="453" width="66.27" height="1039" fill="#ffffff"/><rect x="1094.26" y="453" width="66.27" height="1039" fill="#ffffff"/><rect x="1160.23" y="453" width="66.27" height="1039" fill="#ffffff"/><rect x="1226.20" y="453" width="66.27" height="1039" fill="#ffffff"/><rect x="1292.17" y="453" width="66.27" height="1039" fill="#ffffff"/><rect x="1358.14" y="453" width="66.27" height="1039" fill="#f7f8fa"/><rect x="1424.11" y="453" width="66.27" height="1039" fill="#f7f8fa"/><rect x="1490.08" y="453" width="66.27" height="1039" fill="#ffffff"/><rect x="1556.05" y="453" width="66.27" height="1039" fill="#ffffff"/><rect x="1622.02" y="453" width="66.27" height="1039" fill="#ffffff"/><rect x="1687.99" y="453" width="66.27" height="1039" fill="#ffffff"/><rect x="1753.96" y="453" width="66.27" height="1039" fill="#f1f3fe"/><rect x="1819.93" y="453" width="66.27" height="1039" fill="#f7f8fa"/><rect x="1885.90" y="453" width="66.27" height="1039" fill="#f7f8fa"/><rect x="1951.87" y="453" width="66.27" height="1039" fill="#ffffff"/><rect x="2017.84" y="453" width="66.27" height="1039" fill="#ffffff"/><rect x="2083.81" y="453" width="66.27" height="1039" fill="#ffffff"/><rect x="2149.78" y="453" width="66.27" height="1039" fill="#ffffff"/><rect x="2215.75" y="453" width="66.27" height="1039" fill="#ffffff"/><rect x="2281.72" y="453" width="66.27" height="1039" fill="#f7f8fa"/><rect x="2347.69" y="453" width="66.27" height="1039" fill="#f7f8fa"/><rect x="2413.66" y="453" width="66.27" height="1039" fill="#ffffff"/><rect x="2479.63" y="453" width="66.27" height="1039" fill="#ffffff"/><rect x="2545.60" y="453" width="66.27" height="1039" fill="#ffffff"/><rect x="2611.57" y="453" width="66.27" height="1039" fill="#ffffff"/><rect x="2677.54" y="453" width="66.27" height="1039" fill="#ffffff"/><rect x="2743.51" y="453" width="66.27" height="1039" fill="#f7f8fa"/><rect x="2809.48" y="453" width="66.27" height="1039" fill="#f7f8fa"/><rect x="566.00" y="453" width="1" height="1039" fill="#eceef3"/><rect x="631.97" y="453" width="1" height="1039" fill="#eceef3"/><rect x="697.94" y="453" width="1" height="1039" fill="#eceef3"/><rect x="763.91" y="453" width="1" height="1039" fill="#eceef3"/><rect x="829.88" y="453" width="1" height="1039" fill="#eceef3"/><rect x="895.85" y="453" width="1" height="1039" fill="#eceef3"/><rect x="961.82" y="453" width="1" height="1039" fill="#eceef3"/><rect x="1027.79" y="453" width="1" height="1039" fill="#eceef3"/><rect x="1093.76" y="453" width="1" height="1039" fill="#eceef3"/><rect x="1159.73" y="453" width="1" height="1039" fill="#eceef3"/><rect x="1225.70" y="453" width="1" height="1039" fill="#eceef3"/><rect x="1291.67" y="453" width="1" height="1039" fill="#eceef3"/><rect x="1357.64" y="453" width="1" height="1039" fill="#eceef3"/><rect x="1423.61" y="453" width="1" height="1039" fill="#eceef3"/><rect x="1489.58" y="453" width="1" height="1039" fill="#eceef3"/><rect x="1555.55" y="453" width="1" height="1039" fill="#eceef3"/><rect x="1621.52" y="453" width="1" height="1039" fill="#eceef3"/><rect x="1687.49" y="453" width="1" height="1039" fill="#eceef3"/><rect x="1753.46" y="453" width="1" height="1039" fill="#eceef3"/><rect x="1819.43" y="453" width="1" height="1039" fill="#eceef3"/><rect x="1885.40" y="453" width="1" height="1039" fill="#eceef3"/><rect x="1951.37" y="453" width="1" height="1039" fill="#eceef3"/><rect x="2017.34" y="453" width="1" height="1039" fill="#eceef3"/><rect x="2083.31" y="453" width="1" height="1039" fill="#eceef3"/><rect x="2149.28" y="453" width="1" height="1039" fill="#eceef3"/><rect x="2215.25" y="453" width="1" height="1039" fill="#eceef3"/><rect x="2281.22" y="453" width="1" height="1039" fill="#eceef3"/><rect x="2347.19" y="453" width="1" height="1039" fill="#eceef3"/><rect x="2413.16" y="453" width="1" height="1039" fill="#eceef3"/><rect x="2479.13" y="453" width="1" height="1039" fill="#eceef3"/><rect x="2545.10" y="453" width="1" height="1039" fill="#eceef3"/><rect x="2611.07" y="453" width="1" height="1039" fill="#eceef3"/><rect x="2677.04" y="453" width="1" height="1039" fill="#eceef3"/><rect x="2743.01" y="453" width="1" height="1039" fill="#eceef3"/><rect x="2808.98" y="453" width="1" height="1039" fill="#eceef3"/><rect x="2874.95" y="453" width="1" height="1039" fill="#eceef3"/><rect x="1818.93" y="453" width="1.5" height="1039" fill="#dfe3f8"/><rect x="1753.76" y="453" width="1.2" height="1039" fill="#e2e4f6"/><rect x="2511.86" y="460.5" width="1.5" height="1030" fill="#b5b5bd"/><rect x="580.10" y="1013.00" width="37.7" height="479.00" fill="#4156dd"/><rect x="646.07" y="1013.00" width="37.7" height="479.00" fill="#4156dd"/><rect x="712.04" y="1013.00" width="37.7" height="479.00" fill="#4156dd"/><rect x="778.01" y="1013.00" width="37.7" height="479.00" fill="#4156dd"/><rect x="843.98" y="1013.00" width="37.7" height="479.00" fill="#4156dd"/><rect x="1041.89" y="1013.00" width="37.7" height="479.00" fill="#4156dd"/><rect x="1107.86" y="1013.00" width="37.7" height="479.00" fill="#4156dd"/><rect x="1173.83" y="1013.00" width="37.7" height="479.00" fill="#4156dd"/><rect x="1239.80" y="1013.00" width="37.7" height="479.00" fill="#4156dd"/><rect x="1305.77" y="1013.00" width="37.7" height="479.00" fill="#4156dd"/><rect x="1503.68" y="984.00" width="37.7" height="59.00" fill="#6cc6ea"/><rect x="1503.68" y="1043.00" width="37.7" height="449.00" fill="#4156dd"/><rect x="1569.65" y="984.00" width="37.7" height="59.00" fill="#6cc6ea"/><rect x="1569.65" y="1043.00" width="37.7" height="449.00" fill="#4156dd"/><rect x="1635.62" y="984.00" width="37.7" height="59.00" fill="#6cc6ea"/><rect x="1635.62" y="1043.00" width="37.7" height="449.00" fill="#4156dd"/><rect x="1701.59" y="984.00" width="37.7" height="59.00" fill="#6cc6ea"/><rect x="1701.59" y="1043.00" width="37.7" height="449.00" fill="#4156dd"/><rect x="1767.56" y="984.00" width="37.7" height="59.00" fill="#6cc6ea"/><rect x="1767.56" y="1043.00" width="37.7" height="449.00" fill="#4156dd"/><rect x="1965.47" y="866.20" width="37.7" height="58.80" fill="#6cc6ea"/><rect x="1965.47" y="925.00" width="37.7" height="567.00" fill="#4156dd"/><rect x="2031.44" y="866.20" width="37.7" height="58.80" fill="#6cc6ea"/><rect x="2031.44" y="925.00" width="37.7" height="567.00" fill="#4156dd"/><rect x="2097.41" y="866.20" width="37.7" height="58.80" fill="#6cc6ea"/><rect x="2097.41" y="925.00" width="37.7" height="567.00" fill="#4156dd"/><rect x="2163.38" y="866.20" width="37.7" height="58.80" fill="#6cc6ea"/><rect x="2163.38" y="925.00" width="37.7" height="567.00" fill="#4156dd"/><rect x="2229.35" y="866.20" width="37.7" height="58.80" fill="#6cc6ea"/><rect x="2229.35" y="925.00" width="37.7" height="567.00" fill="#4156dd"/><rect x="2427.26" y="703.80" width="37.7" height="162.40" fill="#6cc6ea"/><rect x="2427.26" y="866.20" width="37.7" height="625.80" fill="#4156dd"/><rect x="2493.23" y="703.80" width="37.7" height="162.40" fill="#6cc6ea"/><rect x="2493.23" y="866.20" width="37.7" height="625.80" fill="#4156dd"/><rect x="2559.20" y="703.80" width="37.7" height="162.40" fill="#6cc6ea"/><rect x="2559.20" y="866.20" width="37.7" height="625.80" fill="#4156dd"/><rect x="2625.17" y="703.80" width="37.7" height="162.40" fill="#6cc6ea"/><rect x="2625.17" y="866.20" width="37.7" height="625.80" fill="#4156dd"/><rect x="2691.14" y="703.80" width="37.7" height="162.40" fill="#6cc6ea"/><rect x="2691.14" y="866.20" width="37.7" height="625.80" fill="#4156dd"/><path d="M599.49 932.34 C621.48 932.34 643.47 932.34 665.46 932.34 C687.45 932.34 709.43 932.34 731.42 932.34 C753.41 932.34 775.40 932.34 797.39 932.34 C819.38 932.34 841.38 932.34 863.37 932.34 C885.36 932.34 907.35 1492.00 929.34 1492.00 C951.33 1492.00 973.32 1492.00 995.31 1492.00 C1017.30 1492.00 1039.29 932.34 1061.28 932.34 C1083.27 932.34 1105.25 932.34 1127.24 932.34 C1149.23 932.34 1171.23 932.34 1193.22 932.34 C1215.21 932.34 1237.19 932.34 1259.18 932.34 C1281.17 932.34 1303.16 932.34 1325.15 932.34 C1347.14 932.34 1369.13 1492.00 1391.12 1492.00 C1413.12 1492.00 1435.11 1492.00 1457.10 1492.00 C1479.09 1492.00 1501.08 932.34 1523.07 932.34 C1545.06 932.34 1567.04 932.34 1589.03 932.34 C1611.02 932.34 1633.01 932.34 1655.00 932.34 C1676.99 932.34 1698.98 932.34 1720.97 932.34 C1742.96 932.34 1764.95 932.34 1786.94 932.34 C1808.93 932.34 1830.92 1492.00 1852.91 1492.00 C1874.90 1492.00 1896.89 1492.00 1918.88 1492.00 C1940.88 1492.00 1962.87 932.34 1984.86 932.34 C2006.85 932.34 2028.83 932.34 2050.82 932.34 C2072.82 932.34 2094.80 932.34 2116.80 932.34 C2138.78 932.34 2160.78 932.34 2182.76 932.34 C2204.75 932.34 2226.74 932.34 2248.73 932.34 C2270.72 932.34 2292.71 1492.00 2314.70 1492.00 C2336.70 1492.00 2358.68 1492.00 2380.68 1492.00 C2402.66 1492.00 2424.66 932.34 2446.64 932.34 C2468.63 932.34 2490.62 932.34 2512.61 932.34 C2534.61 932.34 2556.59 932.34 2578.59 932.34 C2600.57 932.34 2622.57 932.34 2644.55 932.34 C2666.55 932.34 2688.53 932.34 2710.53 932.34 C2732.51 932.34 2754.51 1492.00 2776.49 1492.00 C2798.49 1492.00 2820.47 1492.00 2842.47 1492.00 L2842.47 1492.00 L599.49 1492.00 Z" fill="rgba(180,90,232,0.27)"/><path d="M599.49 932.34 C621.48 932.34 643.47 932.34 665.46 932.34 C687.45 932.34 709.43 932.34 731.42 932.34 C753.41 932.34 775.40 932.34 797.39 932.34 C819.38 932.34 841.38 932.34 863.37 932.34 C885.36 932.34 907.35 1492.00 929.34 1492.00 C951.33 1492.00 973.32 1492.00 995.31 1492.00 C1017.30 1492.00 1039.29 932.34 1061.28 932.34 C1083.27 932.34 1105.25 932.34 1127.24 932.34 C1149.23 932.34 1171.23 932.34 1193.22 932.34 C1215.21 932.34 1237.19 932.34 1259.18 932.34 C1281.17 932.34 1303.16 932.34 1325.15 932.34 C1347.14 932.34 1369.13 1492.00 1391.12 1492.00 C1413.12 1492.00 1435.11 1492.00 1457.10 1492.00 C1479.09 1492.00 1501.08 932.34 1523.07 932.34 C1545.06 932.34 1567.04 932.34 1589.03 932.34 C1611.02 932.34 1633.01 932.34 1655.00 932.34 C1676.99 932.34 1698.98 932.34 1720.97 932.34 C1742.96 932.34 1764.95 932.34 1786.94 932.34 C1808.93 932.34 1830.92 1492.00 1852.91 1492.00 C1874.90 1492.00 1896.89 1492.00 1918.88 1492.00 C1940.88 1492.00 1962.87 932.34 1984.86 932.34 C2006.85 932.34 2028.83 932.34 2050.82 932.34 C2072.82 932.34 2094.80 932.34 2116.80 932.34 C2138.78 932.34 2160.78 932.34 2182.76 932.34 C2204.75 932.34 2226.74 932.34 2248.73 932.34 C2270.72 932.34 2292.71 1492.00 2314.70 1492.00 C2336.70 1492.00 2358.68 1492.00 2380.68 1492.00 C2402.66 1492.00 2424.66 932.34 2446.64 932.34 C2468.63 932.34 2490.62 932.34 2512.61 932.34 C2534.61 932.34 2556.59 932.34 2578.59 932.34 C2600.57 932.34 2622.57 932.34 2644.55 932.34 C2666.55 932.34 2688.53 932.34 2710.53 932.34 C2732.51 932.34 2754.51 1492.00 2776.49 1492.00 C2798.49 1492.00 2820.47 1492.00 2842.47 1492.00" fill="none" stroke="#b03ce6" stroke-width="1.75"/><circle cx="2512.61" cy="932.34" r="6" fill="#b03ce6" stroke="#fff" stroke-width="3"/></svg>
<div class="b" style="left:566.00px;top:453.00px;width:1.00px;height:1039.00px;background:#eceef2;"></div>
<div class="b" style="left:2085px;top:901.5px;width:413px;height:283.7px;background:#fff;box-shadow:0 2px 10px rgba(30,35,70,0.18);border-radius:2px"></div>
<div class="t" style="left:1991.50px;width:600px;text-align:center;top:923.10px;font-size:21.5px;line-height:34.40px;color:#2e3553;font-weight:400;letter-spacing:0.6px;-webkit-text-stroke:0.75px #2e3553;">16th April 2024</div>
<div class="t" style="left:2144.90px;top:968.24px;font-size:19.2px;line-height:30.72px;color:#666d8c;font-weight:400;">Contracted Capacity</div>
<div class="t" style="left:1873.00px;width:600px;text-align:right;top:968.24px;font-size:19.2px;line-height:30.72px;color:#666d8c;font-weight:400;">76h</div>
<div class="t" style="left:2144.90px;top:1001.14px;font-size:19.2px;line-height:30.72px;color:#666d8c;font-weight:400;">Time Off</div>
<div class="t" style="left:1873.00px;width:600px;text-align:right;top:1001.14px;font-size:19.2px;line-height:30.72px;color:#666d8c;font-weight:400;">0h</div>
<div class="t" style="left:2144.90px;top:1033.14px;font-size:19.2px;line-height:30.72px;color:#666d8c;font-weight:400;">Effective Capacity</div>
<div class="t" style="left:1873.00px;width:600px;text-align:right;top:1033.14px;font-size:19.2px;line-height:30.72px;color:#666d8c;font-weight:400;">76h</div>
<div class="t" style="left:2144.90px;top:1065.24px;font-size:19.2px;line-height:30.72px;color:#666d8c;font-weight:400;">Confirmed Workload</div>
<div class="t" style="left:1873.00px;width:600px;text-align:right;top:1065.24px;font-size:19.2px;line-height:30.72px;color:#666d8c;font-weight:400;">85h</div>
<div class="t" style="left:2144.90px;top:1097.74px;font-size:19.2px;line-height:30.72px;color:#666d8c;font-weight:400;">Tentative Workload</div>
<div class="t" style="left:1873.00px;width:600px;text-align:right;top:1097.74px;font-size:19.2px;line-height:30.72px;color:#666d8c;font-weight:400;">22h</div>
<div class="t" style="left:2144.90px;top:1129.44px;font-size:19.2px;line-height:30.72px;color:#666d8c;font-weight:400;">Availability</div>
<div class="t" style="left:1873.00px;width:600px;text-align:right;top:1129.44px;font-size:19.2px;line-height:30.72px;color:#666d8c;font-weight:400;">-31h</div>
<svg class="b" style="left:0;top:0" width="2870" height="1560"><circle cx="2116.7" cy="983" r="7.5" fill="#989cb4"/><clipPath id="tc"><circle cx="2116.7" cy="1015.8" r="7.5"/></clipPath><g clip-path="url(#tc)" stroke="#d5d6e2" stroke-width="2.6"><path d="M2104 1020 L2114 1030 M2104 1012 L2122 1030 M2108 1008 L2128 1028 M2114 1006 L2130 1022"/></g><circle cx="2116.7" cy="1047.9" r="7.5" fill="#e2b8f7"/><rect x="2109" y="1072.5" width="15.3" height="15.3" fill="#4156dd"/><rect x="2109" y="1105" width="15.3" height="15.3" fill="#6cc6ea"/><path d="M2110.5 1135.8 H2122.5" stroke="#b03ce6" stroke-width="2"/><path d="M2110.5 1149.9 H2122.5" stroke="#4156dd" stroke-width="2.4"/><path d="M2116.5 1136 V1149 M2114.3 1136.5 H2118.7 M2114.3 1146.5 H2118.7" stroke="#8e93ab" stroke-width="1.2"/></svg>
<div class="b" style="left:566.50px;top:1492.00px;width:2303.50px;height:68.00px;background:#f7f8fa;"></div>
<div class="b" style="left:566.50px;top:1527.00px;width:329.85px;height:33.00px;background:#f1f2f5;"></div>
<div class="b" style="left:896.35px;top:1527.00px;width:131.94px;height:33.00px;background:#f6f7f9;"></div>
<div class="b" style="left:1028.29px;top:1527.00px;width:329.85px;height:33.00px;background:#f1f2f5;"></div>
<div class="b" style="left:1358.14px;top:1527.00px;width:131.94px;height:33.00px;background:#f6f7f9;"></div>
<div class="b" style="left:1490.08px;top:1527.00px;width:329.85px;height:33.00px;background:#f1f2f5;"></div>
<div class="b" style="left:1819.93px;top:1527.00px;width:131.94px;height:33.00px;background:#f6f7f9;"></div>
<div class="b" style="left:1951.87px;top:1527.00px;width:329.85px;height:33.00px;background:#f1f2f5;"></div>
<div class="b" style="left:2281.72px;top:1527.00px;width:131.94px;height:33.00px;background:#f6f7f9;"></div>
<div class="b" style="left:2413.66px;top:1527.00px;width:329.85px;height:33.00px;background:#f1f2f5;"></div>
<div class="b" style="left:2743.51px;top:1527.00px;width:131.94px;height:33.00px;background:#f6f7f9;"></div>
<div class="b" style="left:566.50px;top:1494.00px;width:65.97px;height:33.00px;background:#f7f8fa;"></div>
<div class="b" style="left:632.47px;top:1494.00px;width:65.97px;height:33.00px;background:#f7f8fa;"></div>
<div class="b" style="left:698.44px;top:1494.00px;width:65.97px;height:33.00px;background:#f7f8fa;"></div>
<div class="b" style="left:764.41px;top:1494.00px;width:65.97px;height:33.00px;background:#f7f8fa;"></div>
<div class="b" style="left:830.38px;top:1494.00px;width:65.97px;height:33.00px;background:#f7f8fa;"></div>
<div class="b" style="left:896.35px;top:1494.00px;width:65.97px;height:33.00px;background:#ffffff;"></div>
<div class="b" style="left:962.32px;top:1494.00px;width:65.97px;height:33.00px;background:#ffffff;"></div>
<div class="b" style="left:1028.29px;top:1494.00px;width:65.97px;height:33.00px;background:#f7f8fa;"></div>
<div class="b" style="left:1094.26px;top:1494.00px;width:65.97px;height:33.00px;background:#f7f8fa;"></div>
<div class="b" style="left:1160.23px;top:1494.00px;width:65.97px;height:33.00px;background:#f7f8fa;"></div>
<div class="b" style="left:1226.20px;top:1494.00px;width:65.97px;height:33.00px;background:#f7f8fa;"></div>
<div class="b" style="left:1292.17px;top:1494.00px;width:65.97px;height:33.00px;background:#f7f8fa;"></div>
<div class="b" style="left:1358.14px;top:1494.00px;width:65.97px;height:33.00px;background:#ffffff;"></div>
<div class="b" style="left:1424.11px;top:1494.00px;width:65.97px;height:33.00px;background:#ffffff;"></div>
<div class="b" style="left:1490.08px;top:1494.00px;width:65.97px;height:33.00px;background:#ffffff;"></div>
<div class="b" style="left:1556.05px;top:1494.00px;width:65.97px;height:33.00px;background:#ffffff;"></div>
<div class="b" style="left:1622.02px;top:1494.00px;width:65.97px;height:33.00px;background:#ffffff;"></div>
<div class="b" style="left:1687.99px;top:1494.00px;width:65.97px;height:33.00px;background:#ffffff;"></div>
<div class="b" style="left:1753.96px;top:1494.00px;width:65.97px;height:33.00px;background:#f7f8fa;"></div>
<div class="b" style="left:1819.93px;top:1494.00px;width:65.97px;height:33.00px;background:#ffffff;"></div>
<div class="b" style="left:1885.90px;top:1494.00px;width:65.97px;height:33.00px;background:#ffffff;"></div>
<div class="b" style="left:1951.87px;top:1494.00px;width:65.97px;height:33.00px;background:#f7f8fa;"></div>
<div class="b" style="left:2017.84px;top:1494.00px;width:65.97px;height:33.00px;background:#f7f8fa;"></div>
<div class="b" style="left:2083.81px;top:1494.00px;width:65.97px;height:33.00px;background:#f7f8fa;"></div>
<div class="b" style="left:2149.78px;top:1494.00px;width:65.97px;height:33.00px;background:#f7f8fa;"></div>
<div class="b" style="left:2215.75px;top:1494.00px;width:65.97px;height:33.00px;background:#f7f8fa;"></div>
<div class="b" style="left:2281.72px;top:1494.00px;width:65.97px;height:33.00px;background:#ffffff;"></div>
<div class="b" style="left:2347.69px;top:1494.00px;width:65.97px;height:33.00px;background:#ffffff;"></div>
<div class="b" style="left:2413.66px;top:1494.00px;width:65.97px;height:33.00px;background:#f7f8fa;"></div>
<div class="b" style="left:2479.63px;top:1494.00px;width:65.97px;height:33.00px;background:#f7f8fa;"></div>
<div class="b" style="left:2545.60px;top:1494.00px;width:65.97px;height:33.00px;background:#f7f8fa;"></div>
<div class="b" style="left:2611.57px;top:1494.00px;width:65.97px;height:33.00px;background:#f7f8fa;"></div>
<div class="b" style="left:2677.54px;top:1494.00px;width:65.97px;height:33.00px;background:#f7f8fa;"></div>
<div class="b" style="left:2743.51px;top:1494.00px;width:65.97px;height:33.00px;background:#ffffff;"></div>
<div class="b" style="left:2809.48px;top:1494.00px;width:65.97px;height:33.00px;background:#ffffff;"></div>
<div class="b" style="left:1753.96px;top:1494.00px;width:63.97px;height:33.00px;background:#8e96ba;"></div>
<div class="b" style="left:566.50px;top:1526.50px;width:2303.50px;height:1.00px;background:#e6e8ee;"></div>
<div class="b" style="left:565.50px;top:1494.00px;width:2.00px;height:66.00px;background:#d6d8e3;"></div>
<div class="b" style="left:895.85px;top:1494.00px;width:1.20px;height:66.00px;background:#dcdee6;"></div>
<div class="b" style="left:1027.29px;top:1494.00px;width:2.00px;height:66.00px;background:#d6d8e3;"></div>
<div class="b" style="left:1357.64px;top:1494.00px;width:1.20px;height:66.00px;background:#dcdee6;"></div>
<div class="b" style="left:1489.08px;top:1494.00px;width:2.00px;height:66.00px;background:#d6d8e3;"></div>
<div class="b" style="left:1819.43px;top:1494.00px;width:1.20px;height:66.00px;background:#dcdee6;"></div>
<div class="b" style="left:1950.87px;top:1494.00px;width:2.00px;height:66.00px;background:#d6d8e3;"></div>
<div class="b" style="left:2281.22px;top:1494.00px;width:1.20px;height:66.00px;background:#dcdee6;"></div>
<div class="b" style="left:2412.66px;top:1494.00px;width:2.00px;height:66.00px;background:#d6d8e3;"></div>
<div class="b" style="left:2743.01px;top:1494.00px;width:1.20px;height:66.00px;background:#dcdee6;"></div>
<div class="b" style="left:2874.45px;top:1494.00px;width:2.00px;height:66.00px;background:#d6d8e3;"></div>
<svg class="b" style="left:0;top:0" width="2870" height="1560"><g fill="#aeb2c7"><path d="M899.15 1520.70 L907.15 1527.00 L899.15 1533.30 Z"/><path d="M1024.49 1520.70 L1016.69 1527.00 L1024.49 1533.30 Z"/><path d="M1360.94 1520.70 L1368.94 1527.00 L1360.94 1533.30 Z"/><path d="M1486.28 1520.70 L1478.48 1527.00 L1486.28 1533.30 Z"/><path d="M1822.73 1520.70 L1830.73 1527.00 L1822.73 1533.30 Z"/><path d="M1948.07 1520.70 L1940.27 1527.00 L1948.07 1533.30 Z"/><path d="M2284.52 1520.70 L2292.52 1527.00 L2284.52 1533.30 Z"/><path d="M2409.86 1520.70 L2402.06 1527.00 L2409.86 1533.30 Z"/><path d="M2746.31 1520.70 L2754.31 1527.00 L2746.31 1533.30 Z"/><path d="M2871.65 1520.70 L2863.85 1527.00 L2871.65 1533.30 Z"/></g></svg>
<div class="t" style="left:575.50px;top:1530.36px;font-size:17.8px;line-height:28.48px;color:#5f6683;font-weight:400;-webkit-text-stroke:0.2px #5f6683;">Mar '24</div>
<div class="t" style="left:1499.58px;top:1530.36px;font-size:17.8px;line-height:28.48px;color:#2e3553;font-weight:400;-webkit-text-stroke:0.2px #2e3553;">Apr '24</div>
<div class="t" style="left:299.49px;width:600px;text-align:center;top:1497.26px;font-size:17.8px;line-height:28.48px;color:#5d6482;font-weight:400;-webkit-text-stroke:0.12px #5d6482;">18</div>
<div class="t" style="left:365.46px;width:600px;text-align:center;top:1497.26px;font-size:17.8px;line-height:28.48px;color:#5d6482;font-weight:400;-webkit-text-stroke:0.12px #5d6482;">19</div>
<div class="t" style="left:431.42px;width:600px;text-align:center;top:1497.26px;font-size:17.8px;line-height:28.48px;color:#5d6482;font-weight:400;-webkit-text-stroke:0.12px #5d6482;">20</div>
<div class="t" style="left:497.39px;width:600px;text-align:center;top:1497.26px;font-size:17.8px;line-height:28.48px;color:#5d6482;font-weight:400;-webkit-text-stroke:0.12px #5d6482;">21</div>
<div class="t" style="left:563.37px;width:600px;text-align:center;top:1497.26px;font-size:17.8px;line-height:28.48px;color:#5d6482;font-weight:400;-webkit-text-stroke:0.12px #5d6482;">22</div>
<div class="t" style="left:629.34px;width:600px;text-align:center;top:1497.26px;font-size:17.8px;line-height:28.48px;color:#a2a7bc;font-weight:400;-webkit-text-stroke:0.12px #a2a7bc;">23</div>
<div class="t" style="left:695.31px;width:600px;text-align:center;top:1497.26px;font-size:17.8px;line-height:28.48px;color:#a2a7bc;font-weight:400;-webkit-text-stroke:0.12px #a2a7bc;">24</div>
<div class="t" style="left:761.28px;width:600px;text-align:center;top:1497.26px;font-size:17.8px;line-height:28.48px;color:#5d6482;font-weight:400;-webkit-text-stroke:0.12px #5d6482;">25</div>
<div class="t" style="left:827.24px;width:600px;text-align:center;top:1497.26px;font-size:17.8px;line-height:28.48px;color:#5d6482;font-weight:400;-webkit-text-stroke:0.12px #5d6482;">26</div>
<div class="t" style="left:893.22px;width:600px;text-align:center;top:1497.26px;font-size:17.8px;line-height:28.48px;color:#5d6482;font-weight:400;-webkit-text-stroke:0.12px #5d6482;">27</div>
<div class="t" style="left:959.18px;width:600px;text-align:center;top:1497.26px;font-size:17.8px;line-height:28.48px;color:#5d6482;font-weight:400;-webkit-text-stroke:0.12px #5d6482;">28</div>
<div class="t" style="left:1025.15px;width:600px;text-align:center;top:1497.26px;font-size:17.8px;line-height:28.48px;color:#5d6482;font-weight:400;-webkit-text-stroke:0.12px #5d6482;">29</div>
<div class="t" style="left:1091.12px;width:600px;text-align:center;top:1497.26px;font-size:17.8px;line-height:28.48px;color:#a2a7bc;font-weight:400;-webkit-text-stroke:0.12px #a2a7bc;">30</div>
<div class="t" style="left:1157.10px;width:600px;text-align:center;top:1497.26px;font-size:17.8px;line-height:28.48px;color:#a2a7bc;font-weight:400;-webkit-text-stroke:0.12px #a2a7bc;">31</div>
<div class="t" style="left:1223.07px;width:600px;text-align:center;top:1497.26px;font-size:17.8px;line-height:28.48px;color:#2e3553;font-weight:400;-webkit-text-stroke:0.12px #2e3553;">1</div>
<div class="t" style="left:1289.03px;width:600px;text-align:center;top:1497.26px;font-size:17.8px;line-height:28.48px;color:#2e3553;font-weight:400;-webkit-text-stroke:0.12px #2e3553;">2</div>
<div class="t" style="left:1355.00px;width:600px;text-align:center;top:1497.26px;font-size:17.8px;line-height:28.48px;color:#2e3553;font-weight:400;-webkit-text-stroke:0.12px #2e3553;">3</div>
<div class="t" style="left:1420.97px;width:600px;text-align:center;top:1497.26px;font-size:17.8px;line-height:28.48px;color:#2e3553;font-weight:400;-webkit-text-stroke:0.12px #2e3553;">4</div>
<div class="t" style="left:1485.94px;width:600px;text-align:center;top:1497.26px;font-size:17.8px;line-height:28.48px;color:#ffffff;font-weight:700;">5</div>
<div class="t" style="left:1552.91px;width:600px;text-align:center;top:1497.26px;font-size:17.8px;line-height:28.48px;color:#a2a7bc;font-weight:400;-webkit-text-stroke:0.12px #a2a7bc;">6</div>
<div class="t" style="left:1618.88px;width:600px;text-align:center;top:1497.26px;font-size:17.8px;line-height:28.48px;color:#a2a7bc;font-weight:400;-webkit-text-stroke:0.12px #a2a7bc;">7</div>
<div class="t" style="left:1684.86px;width:600px;text-align:center;top:1497.26px;font-size:17.8px;line-height:28.48px;color:#5d6482;font-weight:400;-webkit-text-stroke:0.12px #5d6482;">8</div>
<div class="t" style="left:1750.82px;width:600px;text-align:center;top:1497.26px;font-size:17.8px;line-height:28.48px;color:#5d6482;font-weight:400;-webkit-text-stroke:0.12px #5d6482;">9</div>
<div class="t" style="left:1816.80px;width:600px;text-align:center;top:1497.26px;font-size:17.8px;line-height:28.48px;color:#5d6482;font-weight:400;-webkit-text-stroke:0.12px #5d6482;">10</div>
<div class="t" style="left:1882.76px;width:600px;text-align:center;top:1497.26px;font-size:17.8px;line-height:28.48px;color:#5d6482;font-weight:400;-webkit-text-stroke:0.12px #5d6482;">11</div>
<div class="t" style="left:1948.73px;width:600px;text-align:center;top:1497.26px;font-size:17.8px;line-height:28.48px;color:#5d6482;font-weight:400;-webkit-text-stroke:0.12px #5d6482;">12</div>
<div class="t" style="left:2014.70px;width:600px;text-align:center;top:1497.26px;font-size:17.8px;line-height:28.48px;color:#a2a7bc;font-weight:400;-webkit-text-stroke:0.12px #a2a7bc;">13</div>
<div class="t" style="left:2080.68px;width:600px;text-align:center;top:1497.26px;font-size:17.8px;line-height:28.48px;color:#a2a7bc;font-weight:400;-webkit-text-stroke:0.12px #a2a7bc;">14</div>
<div class="t" style="left:2146.64px;width:600px;text-align:center;top:1497.26px;font-size:17.8px;line-height:28.48px;color:#5d6482;font-weight:400;-webkit-text-stroke:0.12px #5d6482;">15</div>
<div class="t" style="left:2212.61px;width:600px;text-align:center;top:1497.26px;font-size:17.8px;line-height:28.48px;color:#5d6482;font-weight:400;-webkit-text-stroke:0.12px #5d6482;">16</div>
<div class="t" style="left:2278.59px;width:600px;text-align:center;top:1497.26px;font-size:17.8px;line-height:28.48px;color:#5d6482;font-weight:400;-webkit-text-stroke:0.12px #5d6482;">17</div>
<div class="t" style="left:2344.55px;width:600px;text-align:center;top:1497.26px;font-size:17.8px;line-height:28.48px;color:#5d6482;font-weight:400;-webkit-text-stroke:0.12px #5d6482;">18</div>
<div class="t" style="left:2410.53px;width:600px;text-align:center;top:1497.26px;font-size:17.8px;line-height:28.48px;color:#5d6482;font-weight:400;-webkit-text-stroke:0.12px #5d6482;">19</div>
<div class="t" style="left:2476.49px;width:600px;text-align:center;top:1497.26px;font-size:17.8px;line-height:28.48px;color:#a2a7bc;font-weight:400;-webkit-text-stroke:0.12px #a2a7bc;">20</div>
<div class="t" style="left:2542.47px;width:600px;text-align:center;top:1497.26px;font-size:17.8px;line-height:28.48px;color:#a2a7bc;font-weight:400;-webkit-text-stroke:0.12px #a2a7bc;">21</div>
<div class="b" style="left:566.50px;top:1491.50px;width:2303.50px;height:2.50px;background:#e3e5ec;"></div>
<div class="b" style="left:7.20px;top:1445.00px;width:483.50px;height:104.50px;background:#fff;border-radius:7px;"></div>
<svg class="b" style="left:0;top:0" width="2870" height="1560"><rect x="19" y="1463" width="15" height="14.8" fill="#4156dd"/><rect x="227" y="1463" width="15" height="14.8" fill="#6cc6ea"/><circle cx="26.5" cy="1497.5" r="7.5" fill="#e2b8f7"/><circle cx="214.4" cy="1497.5" r="7.5" fill="#989cb4"/><clipPath id="lc"><circle cx="26.5" cy="1524.7" r="7.5"/></clipPath><g clip-path="url(#lc)" stroke="#d5d6e2" stroke-width="2.6"><path d="M14 1529 L24 1539 M14 1521 L32 1539 M18 1517 L38 1537 M24 1515 L40 1531"/></g></svg>
<div class="t" style="left:41.60px;top:1455.38px;font-size:18.9px;line-height:30.24px;color:#3d4361;font-weight:400;">Confirmed Workload</div>
<div class="t" style="left:249.50px;top:1455.38px;font-size:18.9px;line-height:30.24px;color:#3d4361;font-weight:400;">Tentative Workload</div>
<div class="t" style="left:41.60px;top:1482.38px;font-size:18.9px;line-height:30.24px;color:#3d4361;font-weight:400;">Effective Capacity</div>
<div class="t" style="left:230.50px;top:1482.38px;font-size:18.9px;line-height:30.24px;color:#3d4361;font-weight:400;">Contracted Capacity</div>
<div class="t" style="left:41.60px;top:1509.58px;font-size:18.9px;line-height:30.24px;color:#3d4361;font-weight:400;">Time Off</div>
</body></html>
